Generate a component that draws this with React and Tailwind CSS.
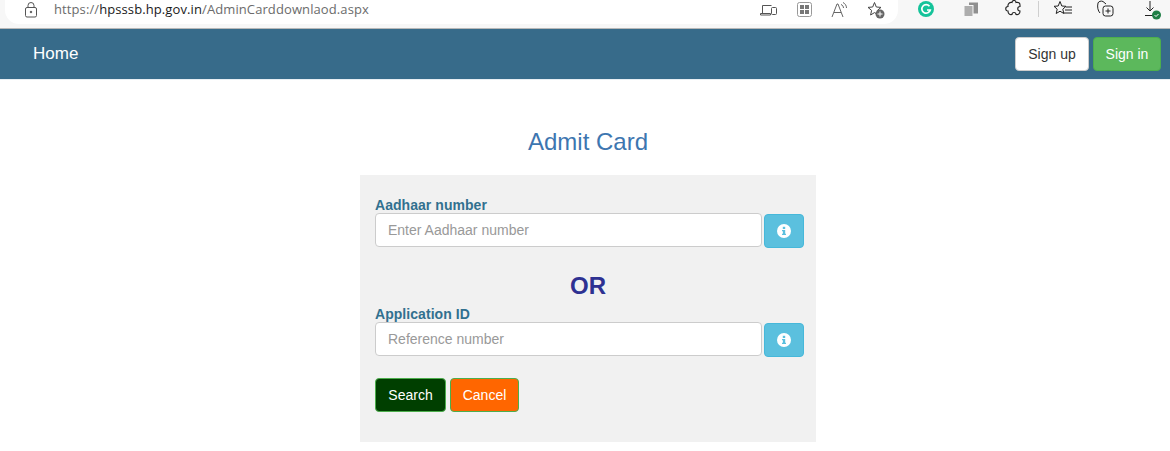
const InfoButton = () => (
    <button type="button" className="ml-[2px] mt-[1px] flex h-[34px] w-[40px] shrink-0 items-center justify-center rounded-[4px] border border-[#46b8da] bg-[#5bc0de]">
        <svg width="14" height="14" viewBox="0 0 14 14">
            <circle cx="7" cy="7" r="7" fill="#fff" />
            <rect x="5.800" y="2.800" width="2.400" height="2.200" fill="#5bc0de" />
            <path d="M5 6h3.200v3.800H9V11H5V9.800h.9V7.200H5z" fill="#5bc0de" />
        </svg>
    </button>
);

const Field = ({ label, placeholder }) => (
    <div>
        <label className="block h-[16px] text-[14px] font-bold leading-[17px] tracking-[0.05px] text-[#31708f]">{label}</label>
        <div className="flex h-[34px] items-start">
            <input
                type="text"
                placeholder={placeholder}
                className="h-[34px] w-[387px] rounded-[4px] border border-[#ccc] bg-white px-3 text-[14px] text-[#555] outline-none placeholder:text-[#999]"
            />
            <InfoButton />
        </div>
    </div>
);

const App = () => {
    return (
        <div className="relative h-[451px] w-[1170px] overflow-hidden bg-white font-['Liberation_Sans',Arial,sans-serif]">
            {/* browser bar */}
            <div className="flex h-[29px] border-b border-[#b8b8b8] bg-[#f7f7f7]">
                <div className="ml-[5px] flex h-[24px] w-[893px] items-center rounded-b-[14px] bg-white">
                    <svg width="14" height="16" viewBox="0 0 14 16" fill="none" stroke="#555" strokeWidth="1" className="ml-[19px] -mt-[4px]">
                        <rect x="1.500" y="5.500" width="11" height="9.500" rx="1.500" />
                        <path d="M4 5.500V3.500a3 3 0 0 1 6 0v2" />
                        <circle cx="7" cy="10" r="0.800" fill="#555" />
                    </svg>
                    <span className="ml-[16px] -mt-[4px] font-['Open_Sans',sans-serif] text-[13px] tracking-[0.1px] text-[#6b6b6b]">
                        https://<span className="text-[#1a1a1a]">hpsssb.hp.gov.in</span>/AdminCarddownlaod.aspx
                    </span>
                    <div className="ml-auto mr-[13px] -mt-[5px] flex items-center gap-[19px]">
                        <svg width="18" height="14" viewBox="0 0 18 14" fill="none" stroke="#555" strokeWidth="1">
                            <path d="M2.500 10V2.500h9M0.500 10.500h10v1.500h-10z" />
                            <rect x="11.500" y="4.500" width="5" height="7" rx="1" />
                        </svg>
                        <svg width="15" height="15" viewBox="0 0 15 15" fill="none">
                            <rect x="0.500" y="0.500" width="14" height="14" rx="2" stroke="#999" />
                            <path d="M3 3h4v4H3zM8 3h4v4H8zM3 8h4v4H3zM8 8h4v4H8z" fill="#777" />
                        </svg>
                        <svg width="17" height="16" viewBox="0 0 17 16" fill="none" stroke="#666" strokeWidth="1">
                            <path d="M1 15 6 2h1l5 13M3 10.500h7" />
                            <path d="M10 2.500c1.500.5 2.500 2 2.500 3.500M12 .5c2 1 3.500 3 3.500 5.500" />
                        </svg>
                        <svg width="18" height="18" viewBox="0 0 18 18">
                            <path d="M7.500 1.500 9.300 6l4.700.4-3.600 3 1 4.600-3.900-2.400L3.600 14l1-4.600-3.600-3L5.700 6z" fill="none" stroke="#444" />
                            <circle cx="13" cy="13" r="4.500" fill="#666" />
                            <path d="M13 10.500v5M10.500 13h5" stroke="#fff" />
                        </svg>
                    </div>
                </div>
                <div className="relative flex-1">
                    <svg width="18" height="18" viewBox="0 0 18 18" className="absolute left-[19px] top-0">
                        <circle cx="9" cy="9" r="8" fill="#15c39a" />
                        <path d="M12.500 6.200A4.300 4.300 0 1 0 13.300 10H10" fill="none" stroke="#fff" strokeWidth="1.700" />
                    </svg>
                    <svg width="16" height="16" viewBox="0 0 16 16" className="absolute left-[65px] top-[2px]">
                        <rect x="6" y="0.500" width="9" height="11" fill="#8f8f8f" />
                        <rect x="1" y="3.500" width="9" height="11" fill="#adadad" stroke="#f7f7f7" />
                    </svg>
                    <svg width="18" height="18" viewBox="0 0 18 18" fill="none" stroke="#222" strokeWidth="1.100" className="absolute left-[107px] top-0">
                        <path d="M7 2.500a2 2 0 0 1 4 0c2.500-.5 4 .5 4 2.500v1.500a2 2 0 0 0 0 4.500c0 2.500-1.500 4-4 3.500a2 2 0 0 0-4 0c-2.500.5-4-1-4-3.500a2.200 2.200 0 0 1 0-4.500C2.500 4 4.500 2 7 2.500z" />
                    </svg>
                    <div className="absolute left-[140px] top-[1px] h-[16px] w-px bg-[#cfcfcf]" />
                    <svg width="20" height="18" viewBox="0 0 20 18" fill="none" stroke="#222" strokeWidth="1" className="absolute left-[155px] top-0">
                        <path d="M7 1.500 8.800 6l4.200.3-3.200 2.900 1 4.300L7 11.200l-3.800 2.300 1-4.300L1 6.300 5.200 6z" />
                        <path d="M13 7h6M12 10h7M11 13h8" />
                    </svg>
                    <svg width="20" height="18" viewBox="0 0 20 18" fill="none" stroke="#222" strokeWidth="1" className="absolute left-[198px] top-0">
                        <path d="M4 13C2 11 1 7 2 3c.5-1.500 3-2.500 5-1.500L10 4" />
                        <rect x="7" y="6" width="10" height="10" rx="2.500" />
                        <path d="M12 8.500v5M9.500 11h5" />
                    </svg>
                    <svg width="20" height="20" viewBox="0 0 20 20" className="absolute left-[245px] top-0">
                        <path d="M7 1v10M3.500 7.500 7 11l3.500-3.500M2 15.500h9" fill="none" stroke="#222" />
                        <circle cx="13.500" cy="15" r="4.500" fill="#1e7e45" />
                        <path d="m11.500 15 1.500 1.500 2.500-2.500" fill="none" stroke="#fff" />
                    </svg>
                </div>
            </div>

            {/* nav */}
            <nav className="flex h-[51px] items-center justify-between border-b border-[#e7eef3] bg-[#376b8a] pl-[33px] pr-[9px]">
                <a className="text-[17px] text-white">Home</a>
                <div className="flex gap-[4px]">
                    <button type="button" className="h-[34px] w-[74px] rounded-[4px] border border-[#ccc] bg-white text-[14px] text-[#333]">Sign up</button>
                    <button type="button" className="h-[34px] w-[68px] rounded-[4px] border border-[#4cae4c] bg-[#5cb85c] text-[14px] text-white">Sign in</button>
                </div>
            </nav>

            {/* content */}
            <h1 className="mt-[46px] pl-[6px] text-center text-[24px] leading-[32px] text-[#3d76b0]">Admit Card</h1>
            <div className="ml-[360px] mt-[17px] h-[267px] w-[456px] bg-[#f1f1f1] pl-[15px] pt-[22px]">
                <Field label="Aadhaar number" placeholder="Enter Aadhaar number" />
                <div className="mt-[23px] h-[32px] pr-[15px] text-center text-[24px] font-bold leading-[32px] text-[#2e3192]">OR</div>
                <div className="mt-[4px]">
                    <Field label="Application ID" placeholder="Reference number" />
                </div>
                <div className="mt-[22px] flex gap-[4px]">
                    <button type="button" className="h-[34px] w-[71px] rounded-[4px] border border-[#4cae4c] bg-[#003f00] text-[14px] text-white">Search</button>
                    <button type="button" className="h-[34px] w-[69px] rounded-[4px] border border-[#4cae4c] bg-[#ff6600] text-[14px] text-white">Cancel</button>
                </div>
            </div>
        </div>
    );
};

export default App;
